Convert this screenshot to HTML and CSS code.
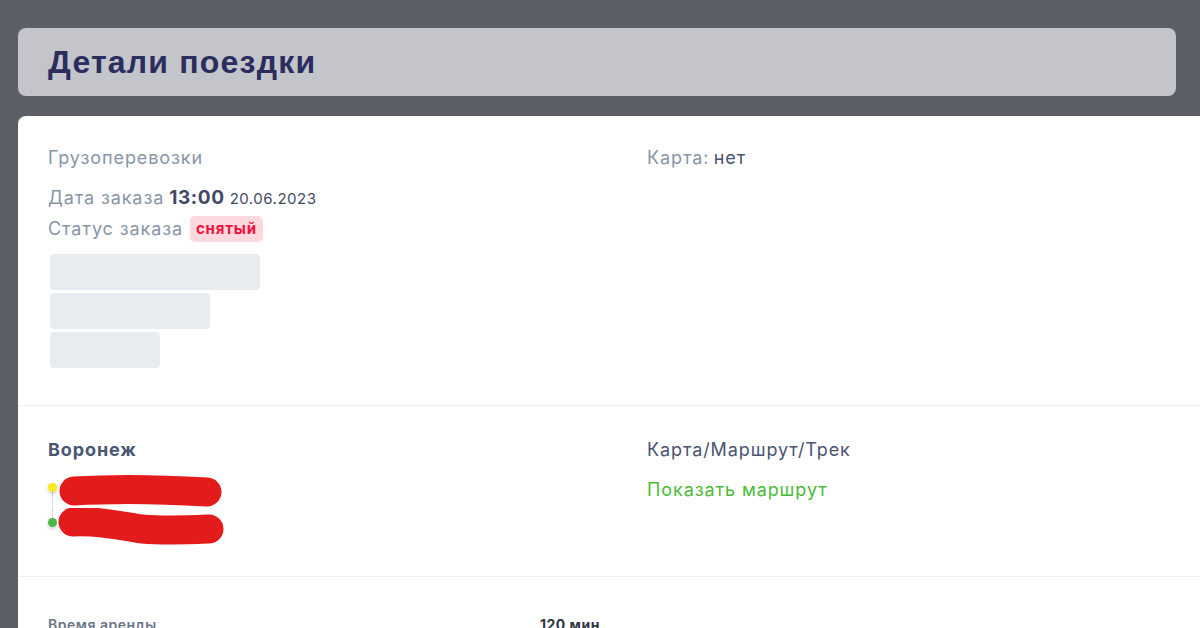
FILE: index.html
```html
<!DOCTYPE html>
<html lang="ru">
<head>
    <meta charset="UTF-8">
    <meta name="viewport" content="width=device-width, initial-scale=1.0">
    <title>Детали поездки</title>
    <link rel="stylesheet" href="styles.css">
</head>
<body>
    <div class="page">
        <!-- header -->
        <header class="pageHeader">
            <h1>Детали поездки</h1>
        </header>

        <div class="card">
            <!-- общие данные -->
            <div class="section twoCols info">
                <div class="col">
                    <div class="muted">Грузоперевозки</div>
                    <div class="row orderDate">
                        <span class="muted">Дата заказа</span>
                        <b class="time">13:00</b>
                        <span class="date">20.06.2023</span>
                    </div>
                    <div class="row status">
                        <span class="muted">Статус заказа</span>
                        <span class="badge">снятый</span>
                    </div>
                    <div class="skeleton">
                        <div class="skel w210"></div>
                        <div class="skel w160"></div>
                        <div class="skel w110"></div>
                    </div>
                </div>
                <div class="col">
                    <div><span class="muted">Карта:</span> <span class="value">нет</span></div>
                </div>
            </div>

            <!-- маршрут -->
            <div class="section twoCols route">
                <div class="col">
                    <div class="city">Воронеж</div>
                    <div class="points">
                        <div class="point first">
                            <span class="dot yellow"></span>
                            <svg class="scribble" width="170" height="34" viewBox="0 0 170 34">
                                <path d="M17 17 C 50 15, 100 15, 150 18" stroke="#e31b1b" stroke-width="29" stroke-linecap="round" fill="none"/>
                            </svg>
                        </div>
                        <div class="point second">
                            <span class="dot green"></span>
                            <svg class="scribble" width="170" height="40" viewBox="0 0 170 40">
                                <path d="M16 14 C 40 13, 60 17, 85 21 C 110 23, 130 22, 152 21" stroke="#e31b1b" stroke-width="29" stroke-linecap="round" fill="none"/>
                            </svg>
                        </div>
                    </div>
                </div>
                <div class="col">
                    <div class="value">Карта/Маршрут/Трек</div>
                    <a class="link" href="#">Показать маршрут</a>
                </div>
            </div>

            <!-- параметры -->
            <div class="section params">
                <div class="paramRow">
                    <span class="paramName">Время аренды</span>
                    <span class="paramValue">120 мин</span>
                </div>
            </div>
        </div>
    </div>
</body>
</html>
```

FILE: styles.css
```css
body {
    margin: 0;
    background-color: #5c5f68;
    font-family: Inter, "Noto Sans", sans-serif;
    overflow: hidden;
}

.page {
    padding: 28px 24px 0 18px;
}

.pageHeader {
    height: 68px;
    box-sizing: border-box;
    padding: 0 30px;
    display: flex;
    align-items: center;
    background-color: #c4c5ca;
    border-radius: 8px;
    margin-bottom: 20px;
}

.pageHeader h1 {
    margin: 0;
    font-family: "Liberation Sans", Arial, sans-serif;
    font-size: 32px;
    letter-spacing: 1.2px;
    font-weight: bold;
    color: #2b2d5e;
}

.card {
    background-color: #fff;
    border-radius: 8px 0 0 0;
    margin-right: -40px;
    height: 600px;
}

.section {
    padding: 30px 30px;
    border-bottom: 1px solid #eceef1;
    line-height: 24px;
}

.twoCols {
    display: grid;
    grid-template-columns: 599px 1fr;
}

.info {
    padding-bottom: 37px;
}

.muted {
    color: #8796a8;
    font-size: 18px;
    letter-spacing: 0.9px;
}

.value {
    color: #4a5472;
    font-size: 18px;
    letter-spacing: 0.9px;
}

.row {
    display: flex;
    align-items: center;
    gap: 5px;
}

.orderDate {
    margin-top: 16px;
    align-items: baseline;
}

.status {
    margin-top: 5px;
    height: 26px;
}

.time {
    font-size: 19px;
    font-weight: 700;
    letter-spacing: 0.6px;
    color: #3f4a66;
}

.date {
    font-size: 15px;
    letter-spacing: 0.5px;
    color: #3f4a66;
}

.badge {
    background-color: #fdd8de;
    color: #f0123c;
    font-size: 15px;
    font-weight: 700;
    letter-spacing: 0.8px;
    line-height: 26px;
    padding: 0 6px;
    border-radius: 5px;
    margin-left: 2px;
}

.skeleton {
    margin-top: 12px;
    display: flex;
    flex-direction: column;
    gap: 3px;
}

.skel {
    height: 36px;
    background-color: #e8ebef;
    border-radius: 4px;
    margin-left: 2px;
}

.w210 { width: 210px; }
.w160 { width: 160px; }
.w110 { width: 110px; }

.route {
    padding-top: 32px;
    padding-bottom: 28px;
}

.city {
    font-weight: 700;
    font-size: 18px;
    letter-spacing: 0.9px;
    color: #4a5672;
}

.points {
    position: relative;
    margin-top: 12px;
}

.points::before {
    content: "";
    position: absolute;
    left: 4px;
    top: 18px;
    height: 30px;
    border-left: 1px dotted #b8bdc4;
}

.point {
    display: flex;
    align-items: flex-start;
}

.first { height: 34px; }
.second { height: 40px; }

.dot {
    width: 9px;
    height: 9px;
    border-radius: 50%;
    flex-shrink: 0;
    position: relative;
    z-index: 1;
    box-shadow: 0 2px 4px rgba(0, 0, 0, 0.2);
}

.first .dot { margin-top: 9px; }
.second .dot { margin-top: 10px; }

.yellow { background-color: #f7ea1f; }
.green { background-color: #4cb848; }

.link {
    display: block;
    margin-top: 16px;
    color: #4cbb3a;
    font-size: 18px;
    letter-spacing: 0.9px;
    text-decoration: none;
}

.params {
    padding-top: 36px;
    border-bottom: none;
}

.paramRow {
    display: grid;
    grid-template-columns: 492px 1fr;
    font-size: 14px;
    font-weight: 600;
    letter-spacing: 0.5px;
}

.paramName { color: #6b7588; }
.paramValue { color: #2f3546; font-weight: 700; }
```
